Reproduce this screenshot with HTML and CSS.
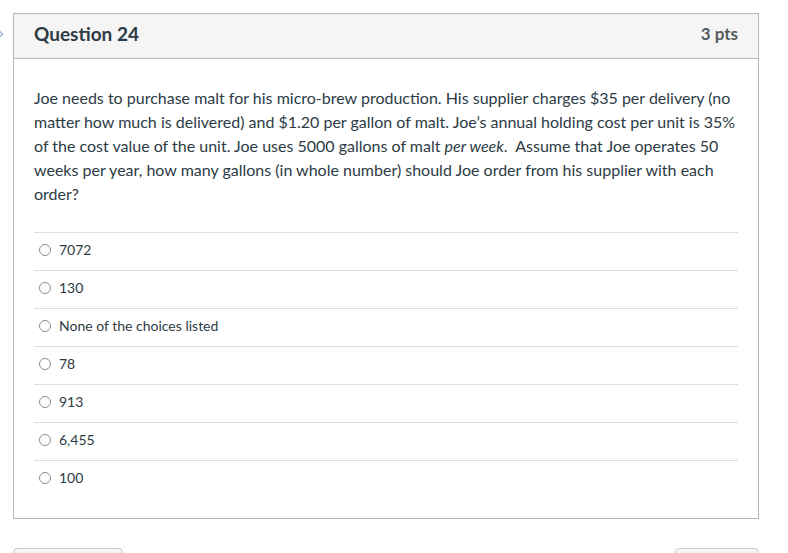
FILE: index.html
```html
<!DOCTYPE html>
<html>
<head>
<meta charset="utf-8">
<link rel="stylesheet" href="styles.css">
</head>
<body>
<div class="page">
  <span class="chev" aria-hidden="true">
    <svg width="6" height="10" viewBox="0 0 6 10"><path d="M0.5 1 L4.5 5 L0.5 9" fill="none" stroke="#8aa4c0" stroke-width="1.2"/></svg>
  </span>
  <div class="card">
    <div class="head">
      <h2 class="title">Question 24</h2>
      <span class="pts">3 pts</span>
    </div>
    <div class="body">
      <p class="text">Joe needs to purchase malt for his micro-brew production. His supplier charges $35 per delivery (no matter how much is delivered) and $1.20 per gallon of malt. Joe’s annual holding cost per unit is 35% of the cost value of the unit. Joe uses 5000 gallons of malt <span class="it">per week</span>.&nbsp; Assume that Joe operates 50 weeks per year, how many gallons (in whole number) should Joe order from his supplier with each order?</p>
      <div class="answers">
        <label class="answer"><span class="radio"></span><span>7072</span></label>
        <label class="answer"><span class="radio"></span><span>130</span></label>
        <label class="answer"><span class="radio"></span><span>None of the choices listed</span></label>
        <label class="answer"><span class="radio"></span><span>78</span></label>
        <label class="answer"><span class="radio"></span><span>913</span></label>
        <label class="answer"><span class="radio"></span><span>6,455</span></label>
        <label class="answer"><span class="radio"></span><span>100</span></label>
      </div>
    </div>
  </div>
  <div class="nav">
    <span class="btn btn-left"></span>
    <span class="btn btn-right"></span>
  </div>
</div>
</body>
</html>
```
FILE: styles.css
```css
html, body {
  margin: 0;
  padding: 0;
  background: #fff;
}
body {
  font-family: Lato, "Noto Sans", sans-serif;
  color: #2d3b45;
  overflow: hidden;
}
.page {
  position: relative;
  padding: 13px 0 0 13px;
  width: 746px;
}
.chev {
  position: absolute;
  left: -2px;
  top: 29px;
  line-height: 0;
}
.card {
  border: 1px solid #b3b6b8;
  background: #fff;
}
.head {
  display: flex;
  align-items: center;
  justify-content: space-between;
  height: 39px;
  padding: 0 20px 5px 20px;
  background: #f5f5f5;
  border-bottom: 1px solid #b3b6b8;
}
.title {
  margin: 0;
  font-size: 19px;
  font-weight: 700;
  color: #2d3b45;
}
.pts {
  font-size: 17px;
  font-weight: 700;
  color: #555a5e;
}
.body {
  padding: 27px 20px 20px 20px;
}
.text {
  margin: 0 0 26px 0;
  font-size: 16px;
  line-height: 24px;
}
.it {
  font-style: italic;
}
.answers {
  display: flex;
  flex-direction: column;
}
.answer {
  display: flex;
  align-items: center;
  gap: 8px;
  height: 33px;
  padding: 0 0 4px 5px;
  border-top: 1px solid #dcdedf;
  font-size: 14px;
  color: #2d3b45;
}
.radio {
  width: 12px;
  height: 12px;
  border: 1px solid #8a8d90;
  border-radius: 50%;
  box-sizing: border-box;
  background: #fff;
}
.nav {
  display: flex;
  justify-content: space-between;
  margin-top: 29px;
}
.btn {
  height: 30px;
  border: 1px solid #c7cdd1;
  border-radius: 4px;
  background: #f5f5f5;
}
.btn-left { width: 108px; }
.btn-right { width: 82px; }
```
